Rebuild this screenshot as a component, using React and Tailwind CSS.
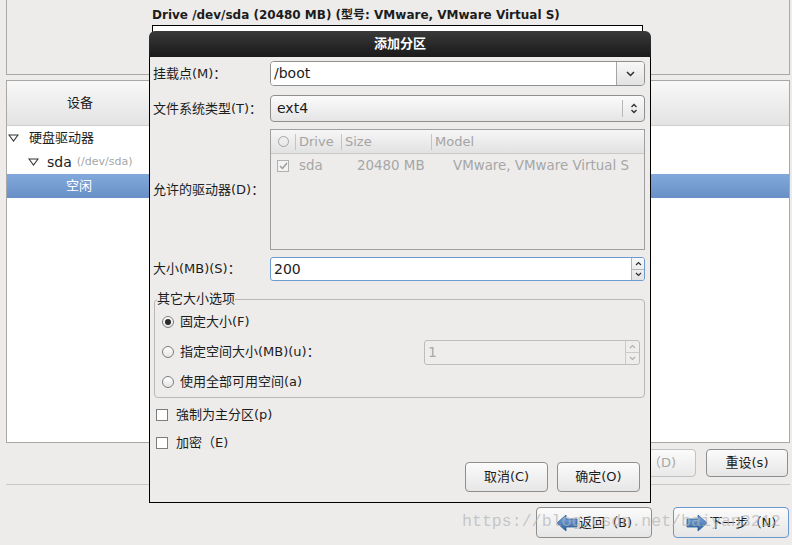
import React from "react"

function Chevron({ up }) {
  return (
    <svg width="9" height="6" viewBox="0 0 9 6">
      <path d={up ? "M1 5l3.5-3.5L8 5" : "M1 1l3.5 3.5L8 1"} fill="none" stroke="#2e2e2e" strokeWidth="1.5" />
    </svg>
  )
}

function UpDown() {
  return (
    <svg width="8" height="13" viewBox="0 0 8 13">
      <path d="M1.5 5l2.5-2.5L6.5 5M1.5 8l2.5 2.5L6.5 8" fill="none" stroke="#2e2e2e" strokeWidth="1.3" />
    </svg>
  )
}

function SmallArrow({ up, color = "#2e2e2e" }) {
  return (
    <svg width="7" height="5" viewBox="0 0 7 5">
      <path d={up ? "M1 4l2.5-2.5L6 4" : "M1 1l2.5 2.5L6 1"} fill="none" stroke={color} strokeWidth="1.2" />
    </svg>
  )
}

function Radio({ checked }) {
  return (
    <span className="w-[12px] h-[12px] rounded-full border border-[#7d7d7d] bg-gradient-to-b from-white to-[#e4e4e4] flex items-center justify-center shrink-0">
      {checked && <span className="w-[6px] h-[6px] rounded-full bg-[#2a2a2a]" />}
    </span>
  )
}

function Check({ checked, dim }) {
  return (
    <span
      className={
        "w-[12px] h-[12px] border flex items-center justify-center shrink-0 " +
        (dim ? "border-[#b0b0b0] bg-[#f2f2f2]" : "border-[#7d7d7d] bg-white")
      }
    >
      {checked && (
        <svg width="9" height="8" viewBox="0 0 9 8">
          <path d="M1 4l2.5 2.5L8 1" fill="none" stroke={dim ? "#9a9a9a" : "#2a2a2a"} strokeWidth="1.4" />
        </svg>
      )}
    </span>
  )
}

function Btn({ children, className = "" }) {
  return (
    <div
      className={
        "flex items-center justify-center rounded-[4px] border bg-gradient-to-b from-[#fbfbfb] to-[#e6e6e6] text-[13px] " +
        className
      }
    >
      {children}
    </div>
  )
}

function NavArrow({ right }) {
  return (
    <svg width="22" height="18" viewBox="0 0 22 18">
      <defs>
        <linearGradient id={right ? "ar" : "al"} x1="0" y1="0" x2="0" y2="1">
          <stop offset="0" stopColor="#7fb0e6" />
          <stop offset="1" stopColor="#2e609f" />
        </linearGradient>
      </defs>
      <path
        d={right ? "M1 5h11V1l9 8-9 8v-4H1z" : "M21 5H10V1L1 9l9 8v-4h11z"}
        fill={`url(#${right ? "ar" : "al"})`}
        stroke="#2a5a96"
        strokeWidth="0.8"
      />
    </svg>
  )
}

function Triangle() {
  return (
    <svg width="11" height="8" viewBox="0 0 11 8">
      <path d="M1 1h9L5.5 7z" fill="none" stroke="#333" strokeWidth="1.1" />
    </svg>
  )
}

export default function App() {
  return (
    <div className="relative w-[792px] h-[545px] overflow-hidden bg-[#edeceb] text-[#1c1c1c] font-['DejaVu_Sans','Noto_Sans_CJK_SC',sans-serif]">
      {/* background installer window */}
      <div className="flex flex-col">
        <div className="-mt-[1px] ml-[6px] mr-[2px] h-[76px] border border-[#a9a8a6]">
          <div className="pl-[145px] pt-[8px] text-[12px] font-bold leading-[15px]">
            Drive /dev/sda (20480 MB) (型号: VMware, VMware Virtual S)
          </div>
          <div className="ml-[145px] mt-[2px] w-[491px] h-[40px] border border-black bg-white" />
        </div>

        <div className="mt-[5px] ml-[6px] mr-[2px] h-[363px] border border-[#a9a8a6] bg-white flex flex-col">
          <div className="h-[45px] shrink-0 flex items-center border-b border-[#cfcfcf] bg-gradient-to-b from-[#f8f8f8] to-[#e3e3e3]">
            <div className="w-[146px] text-center text-[13px]">设备</div>
          </div>
          <div className="h-[24px] flex items-center text-[13px]">
            <span className="ml-[1px]"><Triangle /></span>
            <span className="ml-[10px]">硬盘驱动器</span>
          </div>
          <div className="h-[24px] flex items-center text-[13px]">
            <span className="ml-[21px]"><Triangle /></span>
            <span className="ml-[8px] text-[14px]">sda</span>
            <span className="ml-[5px] text-[11px] text-[#a6a6a6]">(/dev/sda)</span>
          </div>
          <div className="h-[24px] flex items-center text-[13px] text-white bg-gradient-to-b from-[#82a9db] to-[#6890c6]">
            <span className="ml-[59px]">空闲</span>
          </div>
        </div>

        <div className="mt-[6px] mr-[4px] flex justify-end gap-[10px]">
          <Btn className="w-[82px] h-[28px] border-[#c2c2c2] text-[#a8a8a8] from-[#f3f3f3] to-[#e9e9e9]">
            <span className="pr-[12px]">删除（D)</span>
          </Btn>
          <Btn className="w-[82px] h-[28px] border-[#8e8e8e]">重设(s)</Btn>
        </div>

        <div className="mt-[7px] ml-[6px] mr-[2px] h-px bg-[#c9c8c6]" />

        <div className="mt-[22px] mr-[3px] flex justify-end gap-[21px]">
          <Btn className="w-[116px] h-[31px] border-[#8e8e8e] gap-[1px]">
            <NavArrow />
            <span>返回（B)</span>
          </Btn>
          <Btn className="w-[116px] h-[31px] border-[#6b98cc] gap-[2px]">
            <NavArrow right />
            <span>下一步（N)</span>
          </Btn>
        </div>
      </div>

      {/* add partition dialog */}
      <div className="absolute left-[149px] top-[31px] w-[502px] h-[472px] flex flex-col">
        <div className="h-[26px] shrink-0 rounded-t-[6px] bg-gradient-to-b from-[#3a3a3a] to-[#1a1a1a] flex items-center justify-center text-white text-[13px] font-bold">
          添加分区
        </div>
        <div className="flex-1 border-x border-b border-black bg-[#edeceb] pl-[3px] pr-[5px] pt-[4px] text-[13px]">
          <div className="flex items-center h-[25px]">
            <div className="w-[117px] shrink-0">挂载点(M)：</div>
            <div className="flex-1 h-full flex rounded-[4px] border border-[#8f8f8f] overflow-hidden">
              <div className="flex-1 bg-white flex items-center pl-[3px] text-[14px]">/boot</div>
              <div className="w-[28px] border-l border-[#a5a5a5] bg-gradient-to-b from-[#f8f8f8] to-[#e2e2e2] flex items-center justify-center">
                <Chevron />
              </div>
            </div>
          </div>

          <div className="mt-[9px] flex items-center h-[27px]">
            <div className="w-[117px] shrink-0">文件系统类型(T)：</div>
            <div className="flex-1 h-full flex items-center rounded-[4px] border border-[#8f8f8f] bg-gradient-to-b from-[#fbfbfb] to-[#e5e5e5]">
              <span className="flex-1 pl-[6px] text-[14px]">ext4</span>
              <span className="w-px h-[17px] bg-[#b8b8b8]" />
              <span className="w-[21px] flex justify-center"><UpDown /></span>
            </div>
          </div>

          <div className="mt-[7px] flex items-center h-[121px]">
            <div className="w-[117px] shrink-0">允许的驱动器(D)：</div>
            <div className="flex-1 h-full border border-[#9f9f9f] bg-[#edeceb] flex flex-col">
              <div className="h-[24px] shrink-0 flex items-center border-b border-[#c9c9c9] bg-gradient-to-b from-[#f6f6f6] to-[#e2e2e2] text-[#a4a4a4]">
                <span className="w-[24px] flex justify-center"><span className="w-[11px] h-[11px] rounded-full border border-[#a4a4a4]" /></span>
                <span className="w-px h-[16px] bg-[#c4c4c4]" />
                <span className="w-[45px] pl-[3px]">Drive</span>
                <span className="w-px h-[16px] bg-[#c4c4c4]" />
                <span className="w-[89px] pl-[3px]">Size</span>
                <span className="w-px h-[16px] bg-[#c4c4c4]" />
                <span className="pl-[3px]">Model</span>
              </div>
              <div className="h-[24px] flex items-center text-[13.4px] text-[#a6a6a6]">
                <span className="ml-[6px]"><Check checked dim /></span>
                <span className="ml-[10px] w-[58px]">sda</span>
                <span className="w-[96px]">20480 MB</span>
                <span>VMware, VMware Virtual S</span>
              </div>
            </div>
          </div>

          <div className="mt-[7px] flex items-center h-[24px]">
            <div className="w-[117px] shrink-0">大小(MB)(S)：</div>
            <div className="flex-1 h-full flex rounded-[3px] border border-[#6d9bd0] bg-white overflow-hidden">
              <div className="flex-1 flex items-center pl-[3px] text-[14px]">200</div>
              <div className="w-[13px] flex flex-col border-l border-[#b5b5b5] bg-gradient-to-b from-[#f8f8f8] to-[#e4e4e4]">
                <span className="flex-1 flex items-center justify-center border-b border-[#b5b5b5]"><SmallArrow up /></span>
                <span className="flex-1 flex items-center justify-center"><SmallArrow /></span>
              </div>
            </div>
          </div>

          <fieldset className="mt-[10px] ml-[1px] border border-[#b9b8b6] rounded-[4px]">
            <legend className="ml-[2px] leading-[16px] bg-[#edeceb]">其它大小选项</legend>
            <div className="h-[30px] flex items-center gap-[6px] pl-[7px]">
              <Radio checked />
              <span>固定大小(F)</span>
            </div>
            <div className="h-[30px] flex items-center pl-[7px] pr-[4px]">
              <Radio />
              <span className="ml-[6px] flex-1">指定空间大小(MB)(u)：</span>
              <div className="w-[216px] h-[25px] flex rounded-[3px] border border-[#bdbdbd] bg-[#eeedec] overflow-hidden">
                <div className="flex-1 flex items-center pl-[3px] text-[14px] text-[#a8a8a8]">1</div>
                <div className="w-[14px] flex flex-col border-l border-[#cacaca]">
                  <span className="flex-1 flex items-center justify-center border-b border-[#cacaca]"><SmallArrow up color="#b0b0b0" /></span>
                  <span className="flex-1 flex items-center justify-center"><SmallArrow color="#b0b0b0" /></span>
                </div>
              </div>
            </div>
            <div className="h-[30px] flex items-center gap-[6px] pl-[7px]">
              <Radio />
              <span>使用全部可用空间(a)</span>
            </div>
          </fieldset>

          <div className="mt-[3px] h-[28px] flex items-center gap-[8px] pl-[3px]">
            <Check />
            <span>強制为主分区(p)</span>
          </div>
          <div className="h-[28px] flex items-center gap-[8px] pl-[3px]">
            <Check />
            <span>加密（E)</span>
          </div>

          <div className="mt-[5px] mr-[5px] flex justify-end gap-[9px]">
            <Btn className="w-[83px] h-[30px] border-[#8e8e8e]">取消(C)</Btn>
            <Btn className="w-[83px] h-[30px] border-[#8e8e8e]">确定(O)</Btn>
          </div>
        </div>
      </div>

      {/* watermark */}
      <div className="absolute left-[462px] top-[511px] text-[16.6px] leading-[22px] font-['Liberation_Mono',monospace] text-[#b4b4b4]/70 pointer-events-none">
        https://blog.csdn.net/baiyan3212
      </div>
    </div>
  )
}
